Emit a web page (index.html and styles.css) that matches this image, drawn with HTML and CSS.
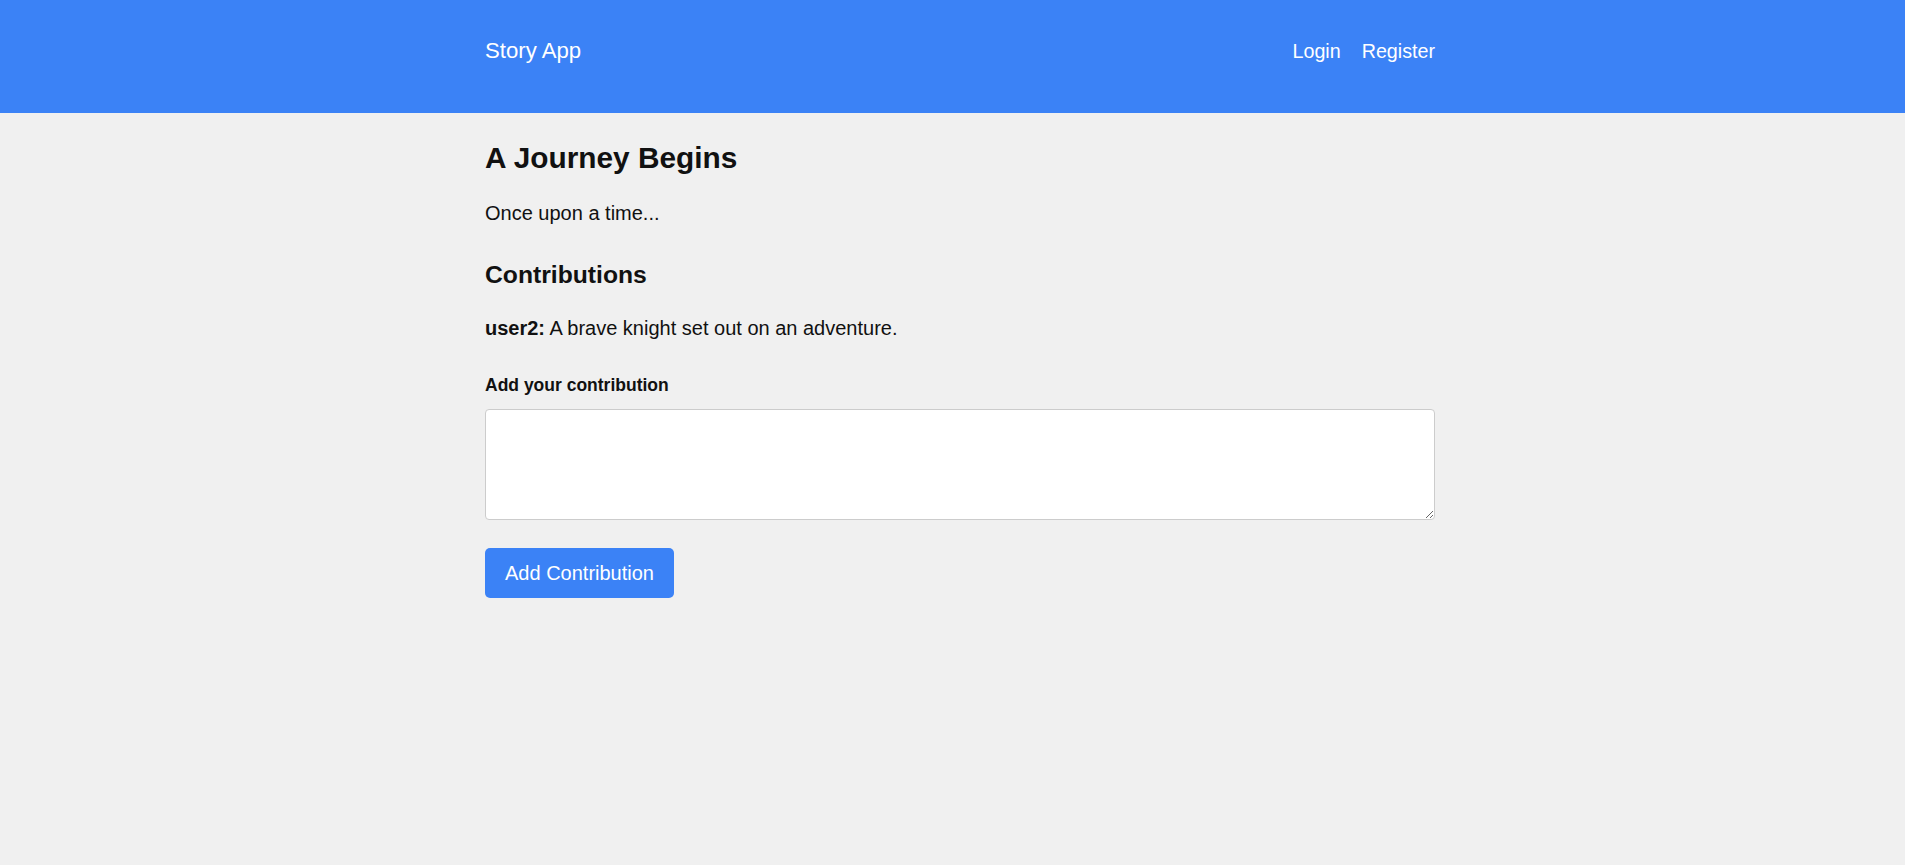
FILE: index.html
```html
<!DOCTYPE html>
<html lang="en">
<head>
<meta charset="utf-8">
<title>Story App</title>
<link rel="stylesheet" href="styles.css">
</head>
<body>
<header class="site-header">
  <div class="wrap">
    <div class="container header-inner">
      <a class="brand" href="#">Story App</a>
      <nav class="nav">
        <a href="#">Login</a>
        <a href="#">Register</a>
      </nav>
    </div>
  </div>
</header>
<div class="wrap">
  <main class="container content">
    <h1 class="story-title">A Journey Begins</h1>
    <p class="story-text">Once upon a time...</p>
    <h2 class="section-title">Contributions</h2>
    <p class="contribution"><strong>user2:</strong> A brave knight set out on an adventure.</p>
    <form class="contribute-form">
      <label class="form-label" for="contrib">Add your contribution</label>
      <textarea id="contrib" class="form-textarea"></textarea>
      <button type="button" class="btn">Add Contribution</button>
    </form>
  </main>
</div>
</body>
</html>
```
FILE: styles.css
```css
* { box-sizing: border-box; }
html, body {
  margin: 0;
  padding: 0;
}
body {
  background: #f0f0f0;
  font-family: "Liberation Sans", Arial, sans-serif;
  color: #111;
  font-size: 20px;
}
.wrap {
  padding-left: 15px;
}
.container {
  max-width: 950px;
  margin: 0 auto;
}
.site-header {
  background: #3b82f6;
  height: 113px;
  padding-top: 38px;
}
.header-inner {
  display: flex;
  justify-content: space-between;
  align-items: baseline;
}
.brand {
  color: #fff;
  text-decoration: none;
  font-size: 22.2px;
}
.nav {
  display: flex;
  gap: 21px;
}
.nav a {
  color: #fff;
  text-decoration: none;
  font-size: 19.7px;
}
.content {
  padding-top: 28px;
}
.story-title {
  font-size: 29.8px;
  margin: 0 0 27px;
  font-weight: bold;
}
.story-text {
  margin: 0 0 36px;
}
.section-title {
  font-size: 24.7px;
  margin: 0 0 28px;
  font-weight: bold;
}
.contribution {
  margin: 0 0 35px;
}
.contribute-form {
  display: flex;
  flex-direction: column;
  align-items: flex-start;
}
.form-label {
  font-size: 17.5px;
  font-weight: bold;
  margin-bottom: 13px;
}
.form-textarea {
  width: 100%;
  height: 111px;
  background: #fff;
  border: 1px solid #ccc;
  border-radius: 4px;
  font-family: inherit;
  font-size: 16px;
  padding: 8px;
  margin: 0;
}
.btn {
  margin-top: 28px;
  height: 50px;
  width: 189px;
  background: #3b82f6;
  color: #fff;
  border: none;
  border-radius: 5px;
  font-family: inherit;
  font-size: 20px;
  cursor: pointer;
}
```
